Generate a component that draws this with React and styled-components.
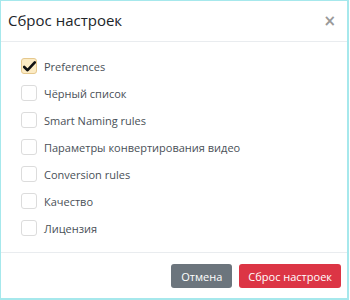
import React, { useState } from 'react';
import styled, { createGlobalStyle } from 'styled-components';

const GlobalStyle = createGlobalStyle`
  html, body {
    margin: 0;
    padding: 0;
    background: #fff;
  }
  * { box-sizing: border-box; }
`

const Modal = styled.div`
  width: 349px;
  height: 300px;
  border: 1px solid #a6e8ec;
  border-right-width: 2px;
  border-bottom-width: 2px;
  background: #fff;
  display: flex;
  flex-direction: column;
  font-family: "Open Sans", "Liberation Sans", sans-serif;
  color: #212529;
`

const Header = styled.div`
  height: 41px;
  display: flex;
  align-items: center;
  justify-content: space-between;
  padding: 0 11px 0 7px;
  border-bottom: 1px solid #e9ecef;
`

const Title = styled.h5`
  margin: 0;
  font-size: 15px;
  font-weight: 400;
  line-height: 1;
  padding-bottom: 2px;
`

const Close = styled.button`
  border: 0;
  background: none;
  padding: 0;
  font-family: "DejaVu Sans", sans-serif;
  font-size: 15px;
  font-weight: bold;
  line-height: 1;
  color: #999;
  cursor: pointer;
`

const Body = styled.div`
  flex: 1;
  padding: 16px 20px 0;
  display: flex;
  flex-direction: column;
  gap: 11px;
  border-bottom: 1px solid #e9ecef;
`

const Row = styled.label`
  display: flex;
  align-items: center;
  gap: 7px;
  height: 16px;
  font-size: 11px;
  color: #495057;
  cursor: pointer;
`

const Box = styled.span`
  width: 16px;
  height: 16px;
  border-radius: 3px;
  border: 1px solid ${({ checked }) => (checked ? '#e5c88e' : '#dcdcdc')};
  background: ${({ checked }) => (checked ? '#fcebc4' : '#fff')};
  display: flex;
  align-items: center;
  justify-content: center;
  flex-shrink: 0;
`

const Footer = styled.div`
  height: 45px;
  display: flex;
  justify-content: flex-end;
  align-items: flex-start;
  padding: 11px 6px 0 0;
  gap: 7px;
`

const Button = styled.button`
  height: 24px;
  border: 0;
  border-radius: 3px;
  padding: 0 ${({ wide }) => (wide ? 9 : 10)}px;
  background: ${({ variant }) => (variant === 'danger' ? '#dc3545' : '#6c757d')};
  color: #fff;
  font-family: "Open Sans", "Liberation Sans", sans-serif;
  font-size: 11px;
  cursor: pointer;
`

const items = [
  'Preferences',
  'Чёрный список',
  'Smart Naming rules',
  'Параметры конвертирования видео',
  'Conversion rules',
  'Качество',
  'Лицензия',
]

const Check = () => (
  <svg width="13" height="11" viewBox="0 0 13 11">
    <path d="M1.2 6 L4.6 9.2 L11.8 1.4" fill="none" stroke="#111" strokeWidth="2.6" strokeLinecap="round" strokeLinejoin="round" />
  </svg>
)

export default function App() {
  const [checked, setChecked] = useState([true, false, false, false, false, false, false])

  const toggle = idx => setChecked(c => c.map((v, i) => (i === idx ? !v : v)))

  return (
    <>
      <GlobalStyle />
      <Modal>
        <Header>
          <Title>Сброс настроек</Title>
          <Close aria-label="Close">×</Close>
        </Header>
        <Body>
          {items.map((text, idx) => (
            <Row key={text} onClick={() => toggle(idx)}>
              <Box checked={checked[idx]}>{checked[idx] && <Check />}</Box>
              {text}
            </Row>
          ))}
        </Body>
        <Footer>
          <Button>Отмена</Button>
          <Button variant="danger" wide>Сброс настроек</Button>
        </Footer>
      </Modal>
    </>
  )
}
